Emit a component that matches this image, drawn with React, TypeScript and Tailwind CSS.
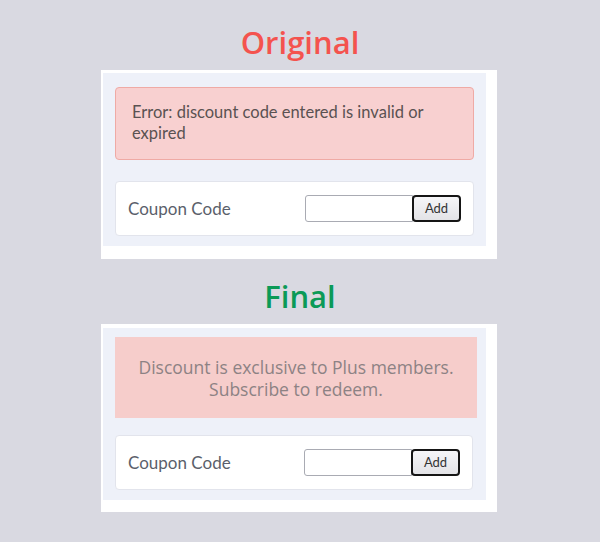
export default function App() {
  const CouponRow = () => (
    <div className="flex items-center justify-between h-[55px] bg-white border border-[#e2e4ec] rounded-[4px] pl-[12px] pr-[12px]">
      <span className="text-[17px] text-[#5b5f6b] font-['Lato',sans-serif]">Coupon Code</span>
      <div className="flex items-center">
        <div className="w-[108px] h-[27px] bg-white border border-[#a9abb3] rounded-l-[3px]" />
        <button className="-ml-[1px] w-[49px] h-[27px] border-2 border-[#151515] rounded-[4px] bg-gradient-to-b from-[#f6f6f8] to-[#e3e3e7] text-[13px] text-[#333] font-['Lato',sans-serif]">
          Add
        </button>
      </div>
    </div>
  );

  return (
    <div className="w-[600px] h-[542px] bg-[#d9d9e1] flex flex-col">
      <div className="h-[70px] flex items-center justify-center pt-[14px]">
        <span className="text-[31px] font-semibold text-[#f4534e] font-['Open_Sans',sans-serif] leading-none">Original</span>
      </div>
      <div className="ml-[101px] w-[396px] bg-white pt-[3px] pl-[2px] pr-[11px] pb-[13px]">
        <div className="bg-[#eef1f9] px-[12px] pt-[14px] pb-[10px]">
          <div className="h-[73px] bg-[#f8d0d0] border border-[#efaaa5] rounded-[4px] pl-[16px] pt-[14px] text-[16.5px] leading-[21px] text-[#5a5252] font-['Lato',sans-serif]">
            <div className="w-[310px]">Error: discount code entered is invalid or expired</div>
          </div>
          <div className="mt-[21px]">
            <CouponRow />
          </div>
        </div>
      </div>
      <div className="h-[65px] flex items-center justify-center pt-[10px]">
        <span className="text-[31px] font-semibold text-[#0b9a57] font-['Open_Sans',sans-serif] leading-none">Final</span>
      </div>
      <div className="ml-[101px] w-[396px] bg-white pt-[4px] pl-[2px] pr-[11px] pb-[12px]">
        <div className="bg-[#eef1f9] pl-[12px] pr-[9px] pt-[9px] pb-[10px]">
          <div className="h-[81px] bg-[#f6cdcb] flex flex-col items-center justify-center text-[17.5px] leading-[22px] text-[#8d8284] font-['Open_Sans',sans-serif]">
            <span>Discount is exclusive to Plus members.</span>
            <span>Subscribe to redeem.</span>
          </div>
          <div className="mt-[17px] mr-[4px]">
            <CouponRow />
          </div>
        </div>
      </div>
    </div>
  );
}
